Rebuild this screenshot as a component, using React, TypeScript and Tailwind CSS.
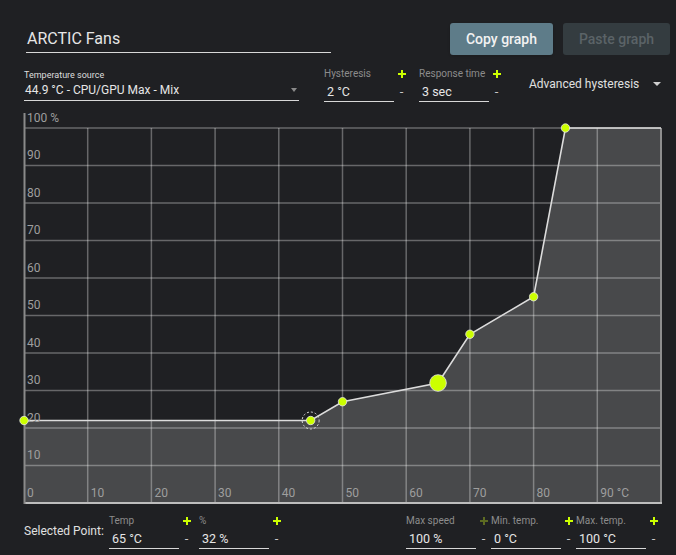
import React from "react";

const LIME = "#ccff00";

const X = (t: number) => 24 + t * 6.37;
const Y = (p: number) => 393 - p * 3.75;

const points: [number, number][] = [
	[0, 22],
	[45, 22],
	[50, 27],
	[65, 32],
	[70, 45],
	[80, 55],
	[85, 100],
];

function Plus({ dim }: { dim?: boolean }) {
	return (
		<svg width="8" height="8" viewBox="0 0 8 8">
			<rect x="3" y="0" width="2" height="8" fill={dim ? "#5d6b22" : LIME} />
			<rect x="0" y="3" width="8" height="2" fill={dim ? "#5d6b22" : LIME} />
		</svg>
	);
}

function Field({ label, value, dim }: { label: string; value: string; dim?: boolean }) {
	return (
		<div className="flex">
			<div className="w-[70px]">
				<div className="text-[10px] leading-[12px] text-[#8c8c8c] whitespace-nowrap">{label}</div>
				<div className="pt-[4px] pb-[2px] pl-[3px] text-[12.5px] leading-[15px] text-[#e6e6e6] border-b border-[#d8d8d8] whitespace-nowrap">
					{value}
				</div>
			</div>
			<div className="w-[15px] flex flex-col items-center">
				<div className="h-[12px] flex items-center justify-center">
					<Plus dim={dim} />
				</div>
				<div className="pt-[5px] text-[13px] leading-[14px] text-[#c8c8c8]">-</div>
			</div>
		</div>
	);
}

function Chart() {
	const grid = [10, 20, 30, 40, 50, 60, 70, 80, 90];
	const poly = [
		`${X(0)},${Y(0)}`,
		...points.map(([t, p]) => `${X(t)},${Y(p)}`),
		`${X(100)},${Y(100)}`,
		`${X(100)},${Y(0)}`,
	].join(" ");
	const line = [...points.map(([t, p]) => `${X(t)},${Y(p)}`), `${X(100)},${Y(100)}`].join(" ");

	return (
		<svg width="676" height="395" className="block" fontFamily="Roboto, sans-serif">
			<polygon points={poly} fill="#48494b" />
			{grid.map((t) => (
				<line key={"v" + t} x1={X(t)} x2={X(t)} y1={Y(100)} y2={Y(0)} stroke="rgba(255,255,255,0.32)" strokeWidth="1.5" />
			))}
			{[...grid, 100].map((p) => (
				<line key={"h" + p} x1={X(0)} x2={X(100)} y1={Y(p)} y2={Y(p)} stroke="rgba(255,255,255,0.32)" strokeWidth="1.5" />
			))}
			<line x1={X(100)} x2={X(100)} y1={Y(100)} y2={Y(0)} stroke="#8e8e8e" strokeWidth="2" />
			<line x1={X(0)} x2={X(100) + 1} y1={Y(0)} y2={Y(0)} stroke="#bdbdbd" strokeWidth="2" />
			<line x1={24.5} x2={24.5} y1={3} y2={Y(0) + 1} stroke="#8a8a8a" strokeWidth="2" />
			<polyline points={line} fill="none" stroke="#dcdcdc" strokeWidth="1.6" />

			<g fill="#9e9e9e" fontSize="12">
				<text x={27} y={Y(100) - 6}>100 %</text>
				{grid.map((p) => (
					<text key={"yl" + p} x={27} y={Y(p) - 6.5}>
						{p}
					</text>
				))}
				<text x={27} y={Y(0) - 6}>0</text>
				{[10, 20, 30, 40, 50, 60, 70, 80].map((t) => (
					<text key={"xl" + t} x={X(t) + 3} y={Y(0) - 6}>
						{t}
					</text>
				))}
				<text x={X(90) + 3} y={Y(0) - 6}>90 °C</text>
			</g>

			<circle cx={X(45)} cy={Y(22)} r="8.5" fill="none" stroke="#dddddd" strokeWidth="1" strokeDasharray="2 2" />
			{points.map(([t, p]) => (
				<circle
					key={"p" + t}
					cx={X(t)}
					cy={Y(p)}
					r={t === 65 ? 8.3 : 4.2}
					fill={LIME}
					stroke="#e8e8e8"
					strokeWidth="0.8"
				/>
			))}
		</svg>
	);
}

export default function App() {
	return (
		<div className="w-[676px] h-[555px] bg-[#1f2023] font-['Roboto',sans-serif] text-[#e6e6e6] overflow-hidden">
			{/* header */}
			<div className="flex items-start pt-[23px]">
				<div className="ml-[26px] mt-[6px] w-[305px] pb-[3px] text-[16px] leading-[20px] pl-[1px] border-b border-[#d8d8d8]">
					ARCTIC Fans
				</div>
				<div className="ml-auto mr-[6px] flex gap-[10px]">
					<button className="w-[103px] h-[32px] rounded-[3px] bg-[#5e7c89] text-[14px] font-medium text-[#f2f2f2] shadow">
						Copy graph
					</button>
					<button className="w-[107px] h-[32px] rounded-[3px] bg-[#343c40] text-[14px] font-medium text-[#5b6367]">
						Paste graph
					</button>
				</div>
			</div>

			{/* settings row */}
			<div className="flex items-start mt-[13px]">
				<div className="ml-[24px] mt-[1px] w-[275px]">
					<div className="text-[9px] leading-[12px] text-[#dedede]">Temperature source</div>
					<div className="flex items-center justify-between pl-[1px] pt-[1px] pb-[2px] text-[12px] leading-[16px] border-b border-[#d8d8d8]">
						<span>44.9 °C - CPU/GPU Max - Mix</span>
						<span className="mr-[2px] border-x-[3.5px] border-t-[4px] border-x-transparent border-t-[#8a8a8a]" />
					</div>
				</div>
				<div className="ml-[25px] flex gap-[10px]">
					<Field label="Hysteresis" value="2 °C" />
					<Field label="Response time" value="3 sec" />
				</div>
				<div className="ml-[25px] mt-[8px] flex items-center gap-[14px] text-[12px] leading-[16px] text-[#e0e0e0]">
					<span>Advanced hysteresis</span>
					<span className="border-x-[4px] border-t-[4px] border-x-transparent border-t-[#d0d0d0]" />
				</div>
			</div>

			{/* chart */}
			<div className="mt-[8px]">
				<Chart />
			</div>

			{/* selected point */}
			<div className="flex items-start mt-[10px] pl-[24px]">
				<div className="w-[85px] mt-[8px] text-[12px] leading-[16px] text-[#e0e0e0] whitespace-nowrap">Selected Point:</div>
				<Field label="Temp" value="65 °C" />
				<div className="ml-[5px]">
					<Field label="%" value="32 %" />
				</div>
				<div className="ml-[122px] flex">
					<Field label="Max speed" value="100 %" dim />
					<Field label="Min. temp." value="0 °C" />
					<Field label="Max. temp." value="100 °C" />
				</div>
			</div>
		</div>
	);
}
